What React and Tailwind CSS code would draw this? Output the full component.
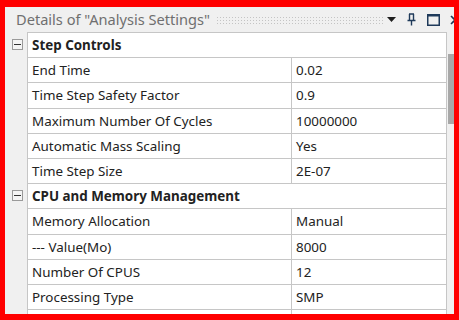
import React from 'react';

const sections = [
  {
    title: 'Step Controls',
    rows: [
      ['End Time', '0.02'],
      ['Time Step Safety Factor', '0.9'],
      ['Maximum Number Of Cycles', '10000000'],
      ['Automatic Mass Scaling', 'Yes'],
      ['Time Step Size', '2E-07'],
    ],
  },
  {
    title: 'CPU and Memory Management',
    rows: [
      ['Memory Allocation', 'Manual'],
      ['--- Value(Mo)', '8000'],
      ['Number Of CPUS', '12'],
      ['Processing Type', 'SMP'],
    ],
  },
];

function Expander() {
  return (
    <div className="w-[11px] h-[11px] border border-[#9a9a9a] bg-[#f4f4f4] flex items-center justify-center">
      <div className="w-[7px] h-[1px] bg-[#333]" />
    </div>
  );
}

export default function App() {
  return (
    <div
      className="w-[459px] h-[320px] overflow-hidden border-[#ff0000] border-t-[7px] border-l-[5px] border-r-[5px] border-b-[6px] bg-[#f0f0f0] flex flex-col text-[13.4px] text-[#222]"
      style={{ fontFamily: '"Noto Sans", "Liberation Sans", sans-serif' }}
    >
      {/* title bar */}
      <div className="h-[25px] shrink-0 flex items-center pl-[11px]">
        <span className="text-[14.6px] text-[#6f6f6f] whitespace-nowrap leading-none">
          Details of "Analysis Settings"
        </span>
        <div className="flex-1 ml-[6px] mr-[4px] h-[8px] bg-[radial-gradient(circle,#c4c4c4_0.8px,transparent_1px)] bg-[length:3px_3px]" />
        <svg width="9" height="6" viewBox="0 0 9 6" className="mr-[11px]">
          <path d="M0 0h9L4.5 5z" fill="#1f1f1f" />
        </svg>
        <svg width="9" height="13" viewBox="0 0 9 13" className="mr-[11px]">
          <path d="M2 1h5M2.5 1v6M6.5 1v6M0.5 7.5h8M4.5 7.5v5" stroke="#1f3a5a" strokeWidth="1.4" fill="none" />
        </svg>
        <svg width="13" height="12" viewBox="0 0 13 12" className="mr-[10px]">
          <rect x="0.75" y="0.75" width="11.5" height="10.5" stroke="#1f3a5a" strokeWidth="1.5" fill="none" />
          <path d="M1 1.5h11" stroke="#1f3a5a" strokeWidth="2" />
        </svg>
        <svg width="10" height="10" viewBox="0 0 10 10" className="shrink-0 -mr-[6px]">
          <path d="M1 1l8 8M9 1l-8 8" stroke="#1f3a5a" strokeWidth="1.6" />
        </svg>
      </div>

      {/* body */}
      <div className="flex flex-1 min-h-0">
        <div className="w-[22px] shrink-0 flex flex-col">
          {sections.map((s) => (
            <div key={s.title} className="flex flex-col">
              <div className="h-[25.2px] flex items-center pl-[7px]">
                <Expander />
              </div>
              {s.rows.map((r) => (
                <div key={r[0]} className="h-[25.2px]" />
              ))}
            </div>
          ))}
        </div>

        <div className="w-[420px] shrink-0 bg-white border-t border-l border-r border-[#c6c6c6] flex flex-col">
          {sections.map((s) => (
            <div key={s.title} className="flex flex-col">
              <div className="h-[25.2px] shrink-0 flex items-center pl-[4px] font-bold border-b border-[#c6c6c6] whitespace-nowrap">
                {s.title}
              </div>
              {s.rows.map(([k, v]) => (
                <div key={k} className="h-[25.2px] shrink-0 flex border-b border-[#c6c6c6]">
                  <div className="w-[264px] shrink-0 pl-[4px] flex items-center border-r border-[#c6c6c6] whitespace-nowrap">
                    {k}
                  </div>
                  <div className="flex-1 pl-[4px] flex items-center">{v}</div>
                </div>
              ))}
            </div>
          ))}
          <div className="h-[25px] shrink-0 flex">
            <div className="w-[264px] shrink-0 border-r border-[#c6c6c6]" />
          </div>
        </div>

        <div className="flex-1 flex flex-col pt-[22px] pl-[1px]">
          <div className="h-[70px] w-[6px] bg-[#a8a8a8]" />
        </div>
      </div>
    </div>
  );
}
